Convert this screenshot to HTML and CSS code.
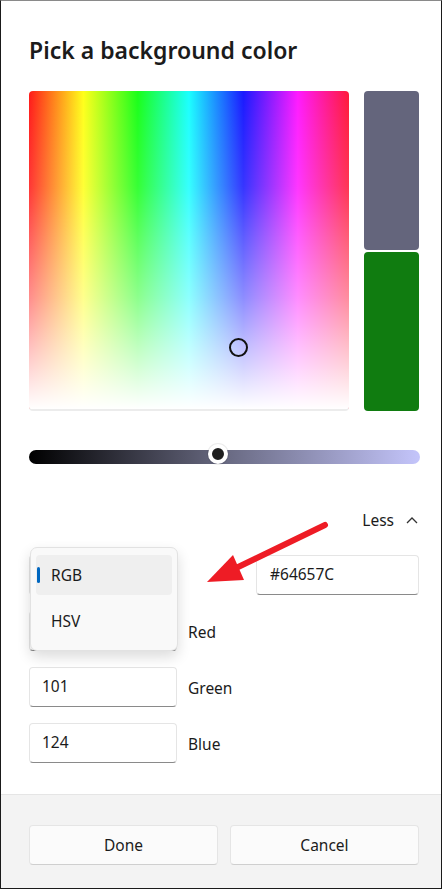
FILE: index.html
```html
<!DOCTYPE html>
<html lang="en">
<head>
  <meta charset="UTF-8">
  <title>Pick a background color</title>
  <meta name="viewport" content="width=device-width, initial-scale=1.0">
  <link rel="stylesheet" href="styles.css">
</head>
<body>

  <div class="dialog">
    <div class="content">
      <h1 class="title">Pick a background color</h1>

      <div class="picker">
        <div class="spectrum">
          <span class="marker"></span>
        </div>
        <div class="preview">
          <div class="swatch current"></div>
          <div class="swatch previous"></div>
        </div>
      </div>

      <div class="slider">
        <span class="thumb"></span>
      </div>

      <div class="more">
        <span>Less</span>
        <svg width="12" height="8" viewBox="0 0 12 8"><polyline points="1,7 6,2 11,7" fill="none" stroke="#333" stroke-width="1.3"/></svg>
      </div>

      <div class="row first">
        <div class="field combo"></div>
        <div class="field hex">#64657C</div>
      </div>
      <div class="row">
        <div class="field"></div>
        <span class="label">Red</span>
      </div>
      <div class="row">
        <div class="field">101</div>
        <span class="label">Green</span>
      </div>
      <div class="row">
        <div class="field">124</div>
        <span class="label">Blue</span>
      </div>
    </div>

    <div class="footer">
      <button class="btn">Done</button>
      <button class="btn">Cancel</button>
    </div>

    <!-- open dropdown -->
    <div class="menu">
      <div class="item selected"><span class="pill"></span>RGB</div>
      <div class="item">HSV</div>
    </div>

    <!-- annotation arrow -->
    <svg class="arrow" width="442" height="889" viewBox="0 0 442 889">
      <line x1="325" y1="525" x2="234" y2="569" stroke="#ee1c25" stroke-width="6" stroke-linecap="round"/>
      <polygon points="207,582 233,555 244,580" fill="#ee1c25"/>
    </svg>
  </div>

</body>
</html>
```

FILE: styles.css
```css
html, body {
  margin: 0;
  padding: 0;
  background: #fff;
}
body {
  font-family: "Noto Sans", "Open Sans", sans-serif;
  color: #1b1b1b;
}
.dialog {
  box-sizing: border-box;
  border: 1px solid #1a1a1a;
  border-top-color: #8a8a8a;
  display: flex;
  flex-direction: column;
  height: 889px;
  position: relative;
  width: 442px;
}
.content {
  padding: 34px 21px 0 28px;
}
.title {
  font-size: 23px;
  font-weight: 600;
  line-height: 30px;
  margin: 0;
}
.picker {
  display: flex;
  gap: 15px;
  margin-top: 26px;
}
.spectrum {
  background:
    linear-gradient(to bottom, rgba(255,255,255,0) 0%, rgba(255,255,255,0.12) 30%, rgba(255,255,255,0.5) 65%, rgba(255,255,255,1) 100%),
    linear-gradient(to right, #ff1a1a 0%, #ffff1a 17%, #1aff1a 34%, #1affff 50%, #1a1aff 67%, #ff1aff 84%, #ff1a3a 100%);
  border-bottom: 2px solid #ececec;
  border-radius: 4px;
  box-sizing: border-box;
  height: 320px;
  position: relative;
  width: 320px;
}
.marker {
  border: 2px solid #111;
  border-radius: 50%;
  box-sizing: border-box;
  height: 19px;
  left: 200px;
  position: absolute;
  top: 247px;
  width: 19px;
}
.preview {
  display: flex;
  flex-direction: column;
  gap: 2px;
  width: 55px;
}
.swatch {
  border-radius: 4px;
  flex: 1;
}
.current {
  background: #64657c;
}
.previous {
  background: #107c10;
}
.slider {
  background: linear-gradient(to right, #000 0%, #64657c 48%, #c4c5fb 100%);
  border-radius: 7px;
  height: 14px;
  margin-top: 39px;
  position: relative;
}
.thumb {
  background: #1f1f1f;
  border: 4px solid #fff;
  border-radius: 50%;
  box-shadow: 0 0 0 1px rgba(0,0,0,0.08);
  height: 12px;
  left: 179px;
  position: absolute;
  top: -6px;
  width: 12px;
}
.more {
  align-items: center;
  display: flex;
  font-size: 15.5px;
  gap: 12px;
  justify-content: flex-end;
  line-height: 20px;
  margin-top: 46px;
  padding-right: 2px;
}
.row {
  align-items: center;
  display: flex;
  gap: 11px;
  margin-top: 16px;
}
.row.first {
  margin-top: 25px;
}
.field {
  background: #fff;
  border: 1px solid #e5e5e5;
  border-bottom-color: #8a8a8a;
  border-radius: 4px;
  box-sizing: border-box;
  font-size: 15.5px;
  height: 40px;
  line-height: 36px;
  padding-left: 12px;
  width: 148px;
}
.hex {
  margin-left: auto;
  margin-right: 1px;
  padding-left: 13px;
  width: 163px;
}
.label {
  font-size: 15.5px;
  padding-top: 2px;
}
.footer {
  background: #f3f3f3;
  border-top: 1px solid #e5e5e5;
  display: flex;
  gap: 12px;
  margin-top: auto;
  padding: 30px 22px 23px 28px;
}
.btn {
  background: #fbfbfb;
  border: 1px solid #e5e5e5;
  border-bottom-color: #cfcfcf;
  border-radius: 4px;
  color: #1b1b1b;
  flex: 1;
  font-family: inherit;
  font-size: 15.5px;
  height: 40px;
}
.menu {
  background: #f9f9f9;
  border: 1px solid #e2e2e2;
  border-radius: 7px;
  box-shadow: 0 6px 14px rgba(0,0,0,0.14);
  box-sizing: border-box;
  height: 104px;
  left: 29px;
  padding: 7px 5px;
  position: absolute;
  top: 546px;
  width: 148px;
}
.item {
  border-radius: 4px;
  font-size: 15.5px;
  height: 40px;
  line-height: 40px;
  margin-bottom: 6px;
  padding-left: 15px;
  position: relative;
}
.selected {
  background: #efefef;
}
.pill {
  background: #0067c0;
  border-radius: 2px;
  height: 16px;
  left: 1px;
  position: absolute;
  top: 12px;
  width: 3px;
}
.arrow {
  left: -1px;
  pointer-events: none;
  position: absolute;
  top: -1px;
}
```
